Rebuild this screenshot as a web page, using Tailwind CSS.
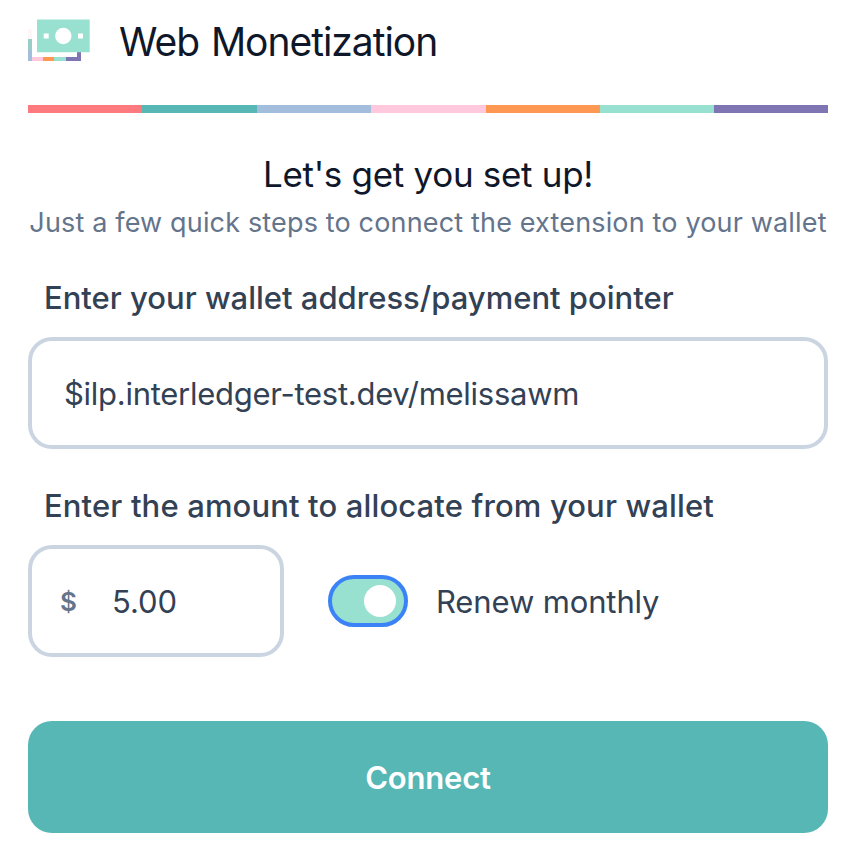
<!DOCTYPE html>
<html lang="en"><head><meta charset="utf-8"><title>Web Monetization</title>
<script src="https://cdn.jsdelivr.net/npm/@tailwindcss/browser@4"></script></head>
<body class="bg-white font-['Inter',sans-serif] text-[#334155] w-[850px] h-[861px] overflow-hidden">
<main class="flex flex-col pl-7 pr-[22px]">
<header class="flex items-start h-[105px] pt-[19px] gap-[29px]">
<svg class="w-[62px] h-[43px] shrink-0" viewBox="28 19 62 43" aria-hidden="true">
<path fill="#fff7f7" d="M28 29h4v10h-4z"/><path fill="#9bcdc8" d="M28 39h4v11h-4z"/><path fill="#a3bedc" d="M28 50h4v11h-4z"/>
<path fill="#ffc8dc" d="M32 57h11v4H32z"/><path fill="#ff9852" d="M43 57h11v4H43z"/><path fill="#98e1d0" d="M54 57h12v4H54z"/><path fill="#8075b3" d="M66 57h11v-6h4v10H66z"/>
<path fill="#98e1d0" d="M37 19.5h52.7v32.8H37z"/><circle cx="63.3" cy="36" r="8.2" fill="#fff"/><path fill="#fff" d="M43.7 33.5h5v5h-5zM78 33.5h5v5h-5z"/>
</svg>
<h1 class="text-[39px] leading-[46px] tracking-[-1.03px] [word-spacing:2px] text-[#0f172a] whitespace-nowrap">Web Monetization</h1>
</header>
<div class="grid grid-cols-[114px_115px_114px_115px_114px_114px_114px] h-2"><i class="bg-[#ff7a7f]"></i><i class="bg-[#56b7b5]"></i><i class="bg-[#a3bedc]"></i><i class="bg-[#ffc8dc]"></i><i class="bg-[#ff9852]"></i><i class="bg-[#98e1d0]"></i><i class="bg-[#8075b3]"></i></div>
<h2 class="mt-[39px] h-[45px] leading-[44px] text-center text-[35px] tracking-[-0.3px] text-[#0f172a]">Let's get you set up!</h2>
<p class="mt-[5px] h-10 leading-[41px] text-center text-[27px] tracking-[0.16px] whitespace-nowrap text-[#64748b]">Just a few quick steps to connect the extension to your wallet</p>
<label for="wallet" class="mt-8 ml-4 h-12 leading-[47px] text-[31px] font-medium">Enter your wallet address/payment pointer</label>
<div id="wallet" class="mt-[15px] h-28 rounded-3xl border-4 border-[#cbd5e1] flex items-center pl-8 pt-0.5 text-[31px] tracking-[-0.27px]">$ilp.interledger-test.dev/melissawm</div>
<label for="amount" class="mt-[33px] ml-4 h-12 leading-[47px] text-[31px] tracking-[0.14px] font-medium">Enter the amount to allocate from your wallet</label>
<div class="mt-[15px] flex items-center h-28">
<div id="amount" class="w-64 h-28 rounded-3xl border-4 border-[#cbd5e1] flex items-center pl-7"><span class="w-[52px] text-[26px] font-semibold text-[#64748b]">$</span><span class="pt-0.5 text-[31px] tracking-[-0.1px]">5.00</span></div>
<div class="ml-11 w-20 h-[52px] rounded-full border-4 border-[#3b82f6] bg-[#98e1d0] flex items-center justify-end pr-2"><i class="size-8 rounded-full bg-white"></i></div>
<span class="ml-7 pt-0.5 text-[31px] tracking-[-0.13px]">Renew monthly</span>
</div>
<button class="mt-16 h-28 rounded-3xl bg-[#56b7b5] text-white pt-0.5 text-[31px] font-semibold tracking-[-0.2px]">Connect</button>
</main></body></html>
